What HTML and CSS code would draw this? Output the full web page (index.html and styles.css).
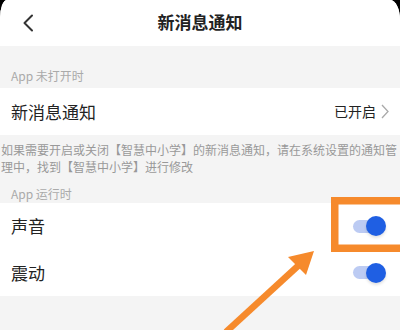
FILE: index.html
```html
<!DOCTYPE html>
<html lang="zh-CN">
<head>
<meta charset="utf-8">
<link rel="stylesheet" href="styles.css">
</head>
<body>
<div class="screen">
  <div class="header">
    <div class="back">
      <svg width="12" height="18" viewBox="0 0 12 18"><path d="M10 1.5 L2.5 9 L10 16.5" fill="none" stroke="#333" stroke-width="2" stroke-linecap="round" stroke-linejoin="round"/></svg>
    </div>
    <div class="title">新消息通知</div>
    <div></div>
  </div>
  <div class="label label-first">App 未打开时</div>
  <div class="row row-nav">
    <span class="row-text">新消息通知</span>
    <span class="value">已开启<svg class="chev" width="8" height="15" viewBox="0 0 8 15"><path d="M1 1 L7 7.5 L1 14" fill="none" stroke="#aaa" stroke-width="1.3"/></svg></span>
  </div>
  <div class="note">如果需要开启或关闭【智慧中小学】的新消息通知，请在系统设置的通知管理中，找到【智慧中小学】进行修改</div>
  <div class="label label-second">App 运行时</div>
  <div class="group">
    <div class="row row-a">
      <span class="row-text">声音</span>
      <span class="toggle"><span class="track"></span><span class="knob"></span></span>
    </div>
    <div class="row row-b">
      <span class="row-text">震动</span>
      <span class="toggle"><span class="track"></span><span class="knob"></span></span>
    </div>
  </div>
  <svg class="annot" width="400" height="330" viewBox="0 0 400 330">
    <rect x="334.75" y="200.75" width="70" height="47.5" fill="none" stroke="#f68a2c" stroke-width="7.5"/>
    <line x1="226" y1="332" x2="299" y2="265" stroke="#f68a2c" stroke-width="6.5"/>
    <polygon points="314,251 288,257 306,275" fill="#f68a2c"/>
  </svg>
</div>
</body>
</html>
```

FILE: styles.css
```css
html, body {
  margin: 0;
  padding: 0;
  background: #000;
}
body {
  width: 400px;
  height: 330px;
  overflow: hidden;
  font-family: "Noto Sans CJK SC", "Noto Sans", sans-serif;
}
.screen {
  position: relative;
  width: 400px;
  height: 330px;
  background: #f4f4f4;
  border-top-left-radius: 7px 18px;
  border-top-right-radius: 10px 20px;
  overflow: hidden;
}
.header {
  height: 46px;
  background: #fff;
  display: grid;
  grid-template-columns: 1fr auto 1fr;
  align-items: center;
}
.back {
  padding-left: 22px;
  display: flex;
  align-items: center;
  height: 18px;
  margin-top: -1px;
}
.title {
  font-size: 17px;
  font-weight: 600;
  color: #222;
  line-height: 20px;
  margin-top: -2px;
}
.label {
  font-size: 12px;
  color: #aaa;
  line-height: 17px;
  padding-left: 11px;
}
.label-first {
  height: 42px;
  box-sizing: border-box;
  padding-top: 21px;
}
.label-second {
  padding-top: 10px;
  padding-bottom: 1px;
}
.row {
  background: #fff;
  display: flex;
  align-items: center;
  justify-content: space-between;
  padding-left: 11px;
}
.row-text {
  font-size: 17px;
  color: #222;
  line-height: 20px;
}
.row-nav {
  height: 47px;
  padding-right: 11px;
}
.value {
  font-size: 14px;
  color: #222;
  display: flex;
  align-items: center;
  gap: 5px;
  margin-top: -1px;
}
.chev {
  display: block;
}
.note {
  font-size: 12px;
  line-height: 17px;
  color: #999;
  padding: 6px 2px 0 1px;
}
.group .row-a { height: 46px; }
.group .row-b { height: 47px; }
.toggle {
  position: relative;
  width: 33px;
  height: 20px;
  margin-right: 14px;
}
.track {
  position: absolute;
  left: 0;
  top: 3.5px;
  width: 26px;
  height: 13px;
  border-radius: 7px;
  background: #bccbf3;
}
.knob {
  position: absolute;
  right: 0;
  top: 0;
  width: 20px;
  height: 20px;
  border-radius: 50%;
  background: #1f5fe3;
  box-shadow: 0 2px 3px rgba(0,0,0,0.12);
}
.annot {
  position: absolute;
  left: 0;
  top: 0;
  pointer-events: none;
}
```
